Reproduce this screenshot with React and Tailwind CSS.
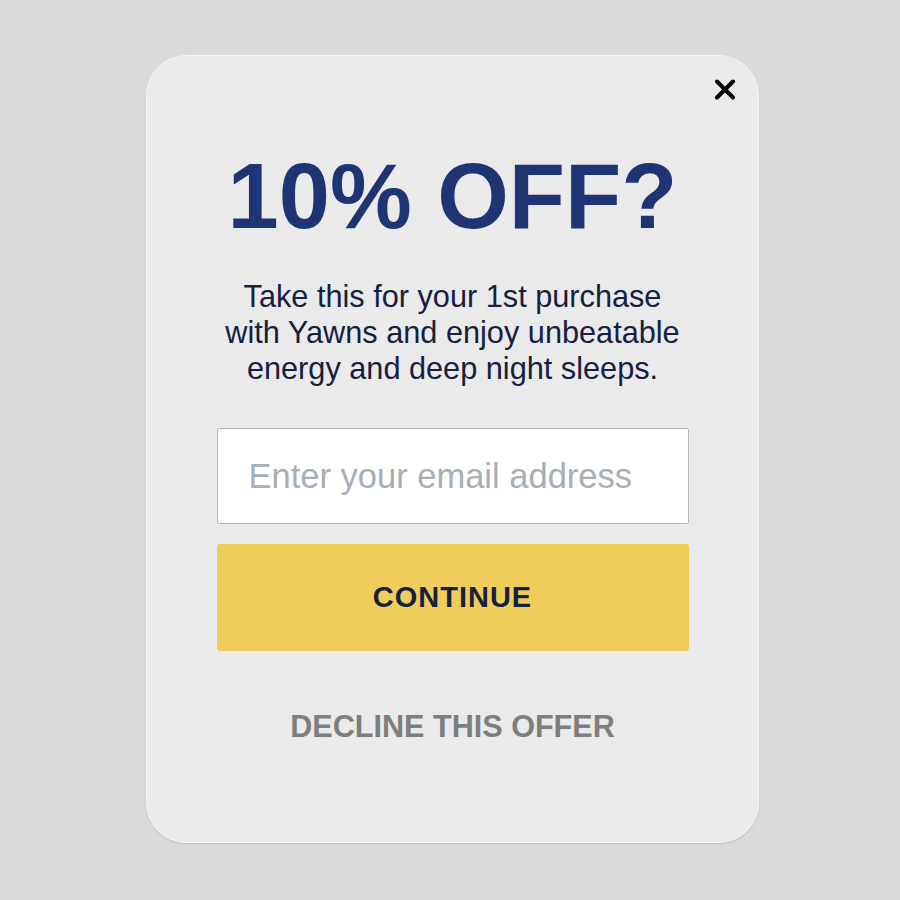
import React from "react";

export default function App() {
  return (
    <div className="w-full h-[900px] bg-[#dadada] pt-[55px] pl-[146px]" style={{ fontFamily: '"Liberation Sans", Arial, sans-serif' }}>
      <div className="relative w-[613px] h-[788px] rounded-[40px] bg-[#eaeaea] border border-[#f5f5f5] shadow-[0_1px_2px_rgba(0,0,0,0.12)] flex flex-col items-center pt-[94px] px-[70px]">
        <button className="absolute top-[23px] right-[22px] w-[22px] h-[21px] flex items-center justify-center">
          <svg width="22" height="21" viewBox="0 0 22 21">
            <path d="M3 2.5 L19 18.5 M19 2.5 L3 18.5" stroke="#000" strokeWidth="4" strokeLinecap="round" />
          </svg>
        </button>
        <h1 className="text-[92px] leading-[92px] font-bold text-[#1e3473] text-center whitespace-nowrap">10% OFF?</h1>
        <p className="mt-[37px] text-[30.7px] leading-[36px] text-[#16203f] text-center whitespace-nowrap">
          Take this for your 1st purchase
          <br />
          with Yawns and enjoy unbeatable
          <br />
          energy and deep night sleeps.
        </p>
        <input
          type="email"
          placeholder="Enter your email address"
          className="mt-[41px] w-[472px] h-[96px] bg-white border border-[#b5b5b5] rounded-[2px] px-[31px] text-[34.5px] text-[#333] placeholder:text-[#a7aeb5] outline-none"
        />
        <button className="mt-[20px] w-[472px] h-[107px] bg-[#f0cd5b] rounded-[3px] text-[29px] font-bold tracking-[1px] text-[#16213e]">
          CONTINUE
        </button>
        <button className="mt-[57px] text-[30.6px] leading-[36px] font-bold text-[#7e7e7e] whitespace-nowrap">DECLINE THIS OFFER</button>
      </div>
    </div>
  );
}
